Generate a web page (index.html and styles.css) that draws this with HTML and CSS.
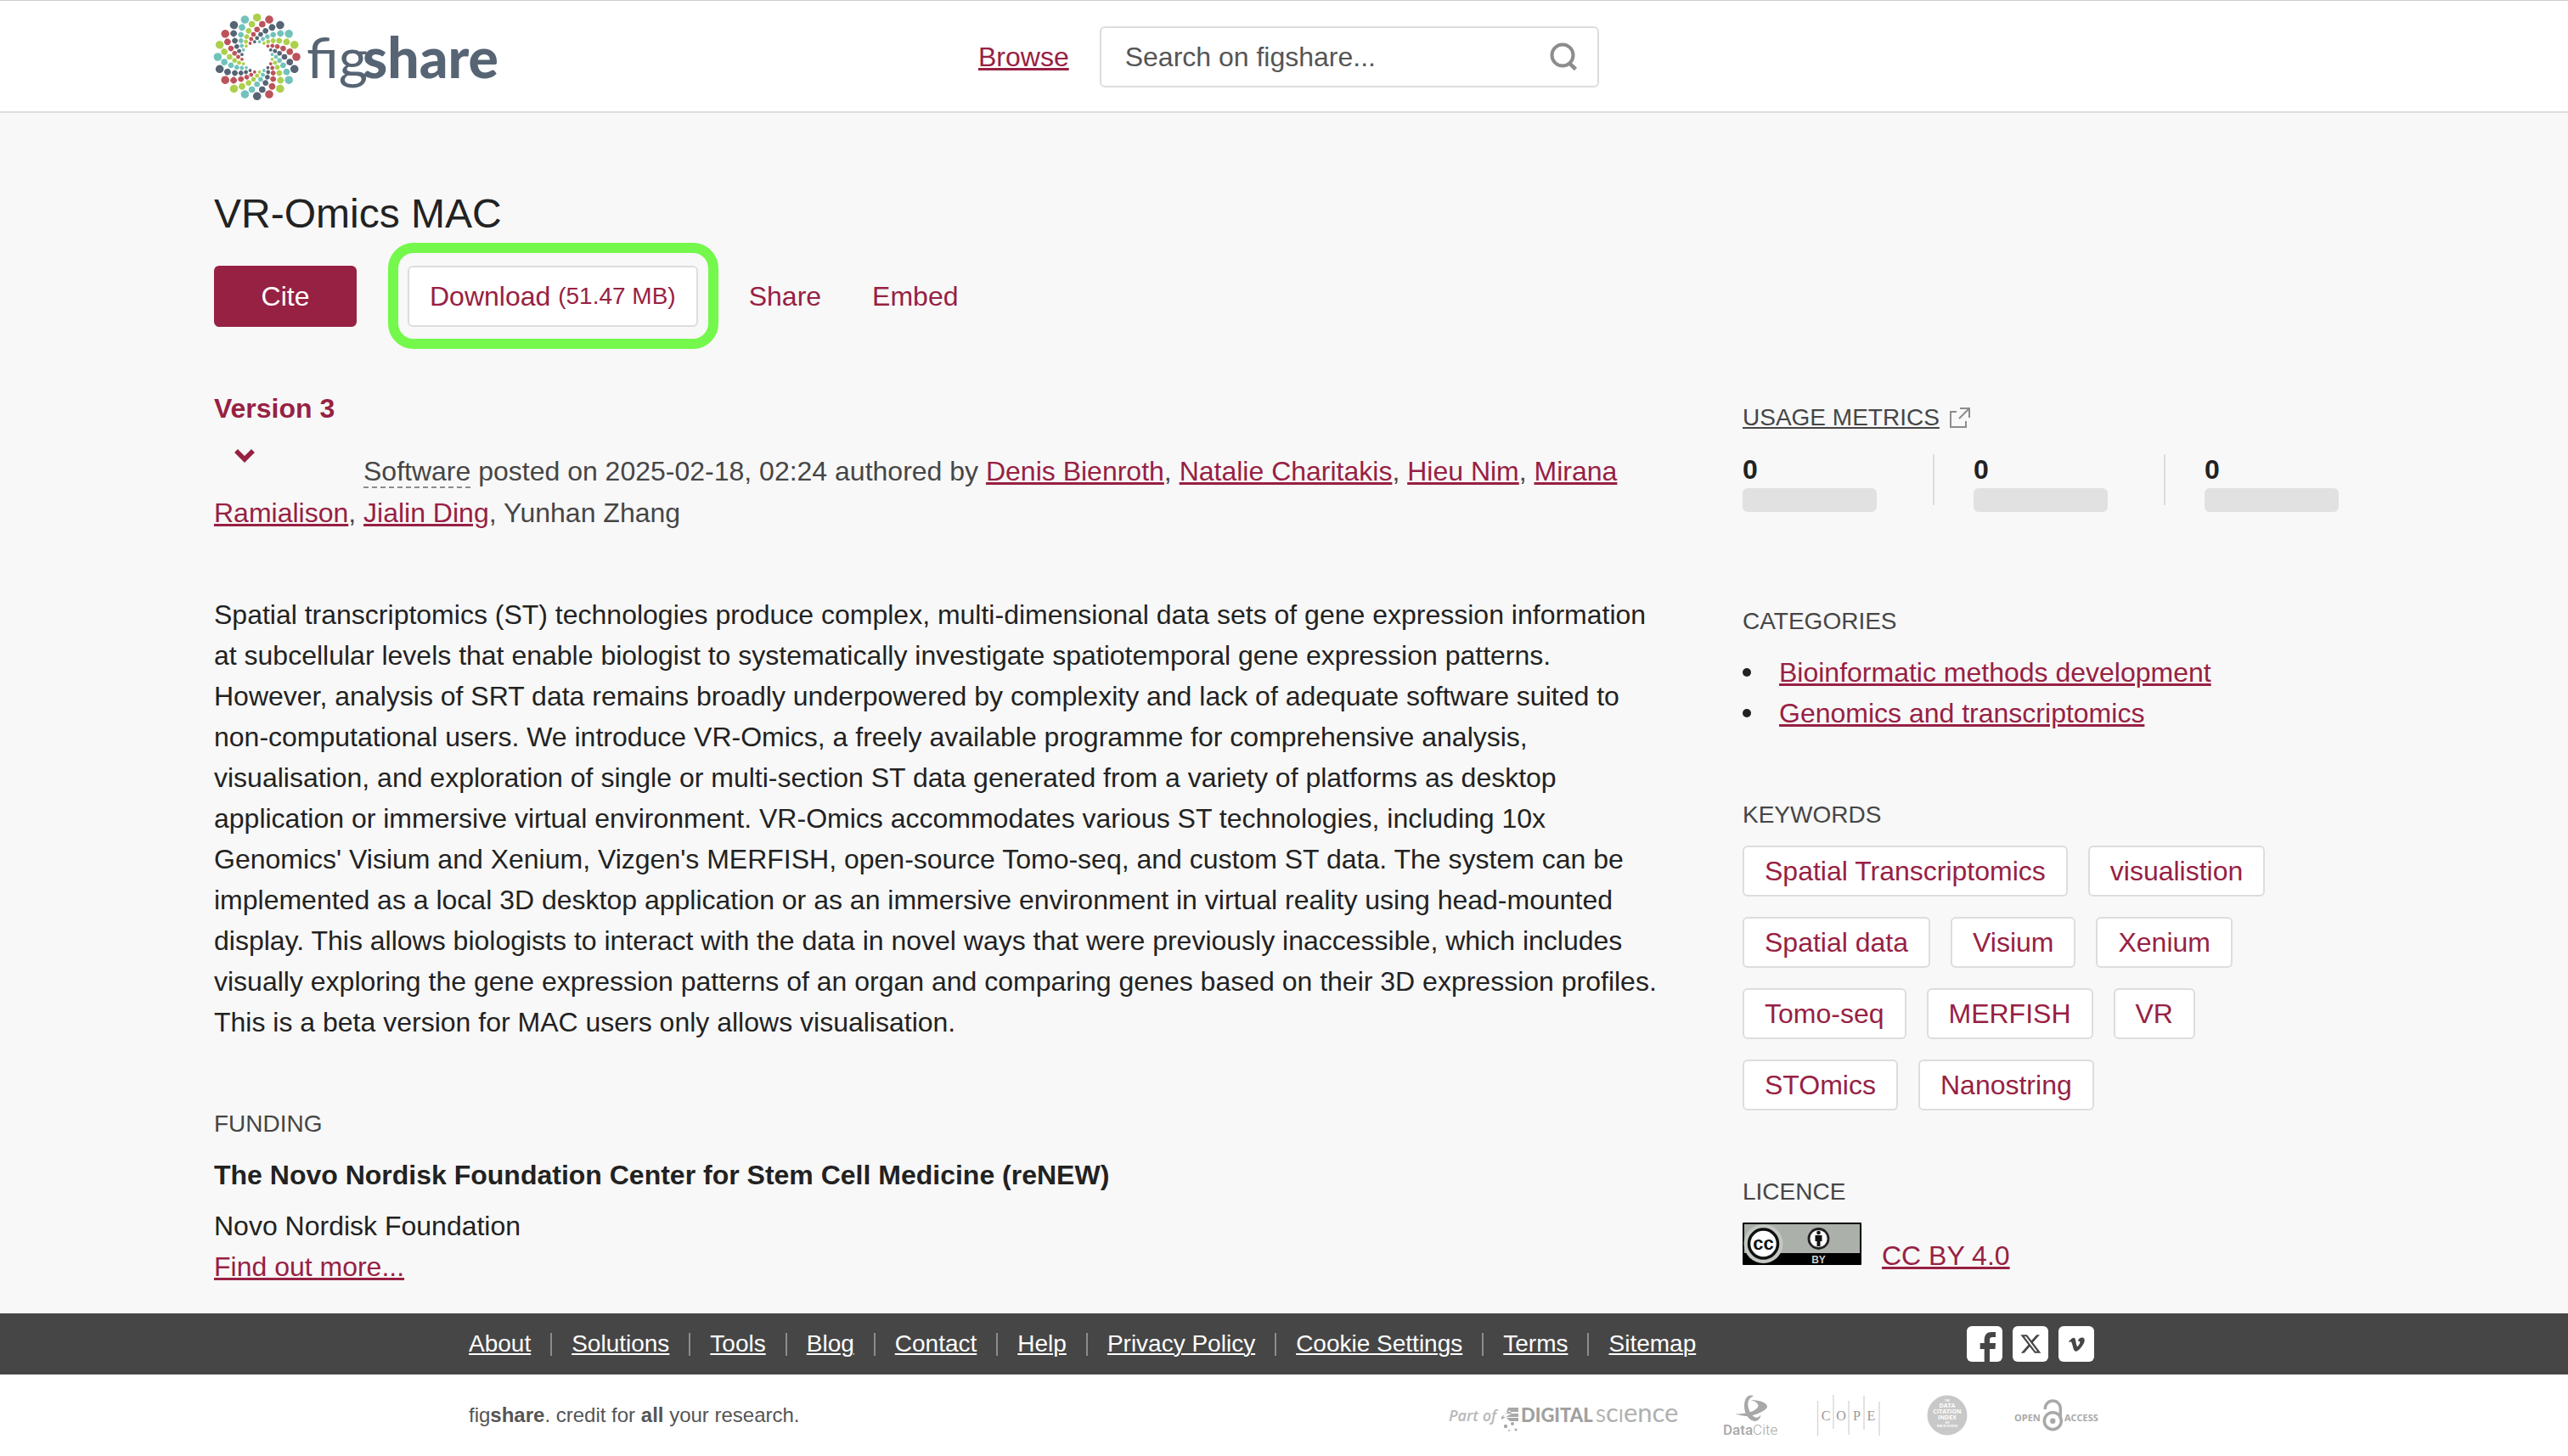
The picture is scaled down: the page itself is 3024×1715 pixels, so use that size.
FILE: index.html
```html
<!DOCTYPE html>
<html lang="en">
<head>
<meta charset="utf-8">
<title>VR-Omics MAC</title>
<link rel="stylesheet" href="styles.css">
</head>
<body>
<header class="site-header">
  <div class="brand">
    <a href="#" aria-label="figshare">
      <svg class="logo" viewBox="0 0 336 108" width="336" height="108">
        <defs>
          <g id="arm">
            <circle cx="0" cy="-46.3" r="4.8"/>
            <circle cx="0" cy="-39" r="3.8" transform="rotate(-9)"/>
            <circle cx="0" cy="-32.3" r="3.3" transform="rotate(-18)"/>
            <circle cx="0" cy="-26.8" r="2.8" transform="rotate(-27)"/>
            <circle cx="0" cy="-22.2" r="2.4" transform="rotate(-36)"/>
            <circle cx="0" cy="-18" r="1.9" transform="rotate(-45)"/>
          </g>
          <g id="arms">
            <use href="#arm" fill="#acd04c"/>
            <use href="#arm" fill="#bc535b" transform="rotate(18)"/>
            <use href="#arm" fill="#566474" transform="rotate(36)"/>
            <use href="#arm" fill="#72c2bc" transform="rotate(54)"/>
          </g>
        </defs>
        <g transform="translate(50.7 54)">
          <use href="#arms"/>
          <use href="#arms" transform="rotate(72)"/>
          <use href="#arms" transform="rotate(144)"/>
          <use href="#arms" transform="rotate(216)"/>
          <use href="#arms" transform="rotate(288)"/>
        </g>
        <text class="logo-text" x="109" y="79">fig<tspan class="logo-bold" x="175">share</tspan></text>
      </svg>
    </a>
  </div>
  <nav class="top-nav">
    <a href="#">Browse</a>
    <form class="search">
      <input type="text" aria-label="Search on figshare" placeholder="Search on figshare...">
      <button type="submit" aria-label="Search">
        <svg viewBox="0 0 34 34" width="34" height="34"><circle cx="15" cy="15" r="12.5" fill="none" stroke="#8c8c8c" stroke-width="4"/><path d="M22.500 24L30.500 31.500" stroke="#8c8c8c" stroke-width="4.500"/></svg>
      </button>
    </form>
  </nav>
</header>

<main class="page">
  <h1>VR-Omics MAC</h1>
  <div class="actions">
    <button class="btn btn-primary">Cite</button>
    <div class="download-wrap">
      <button class="btn btn-outline">Download <span class="size">(51.47 MB)</span></button>
      <span class="highlight"></span>
    </div>
    <button class="btn">Share</button>
    <button class="btn">Embed</button>
  </div>

  <div class="columns">
    <article>
      <p class="meta"><button class="version">Version 3<svg viewBox="0 0 24 15" width="24" height="15"><path d="M2 2l10 10L22 2" fill="none" stroke="#972143" stroke-width="5.500"/></svg></button><span class="type">Software</span> posted on 2025-02-18, 02:24 authored by <a href="#">Denis Bienroth</a>, <a href="#">Natalie Charitakis</a>, <a href="#">Hieu Nim</a>, <a href="#">Mirana Ramialison</a>, <a href="#">Jialin Ding</a>, Yunhan Zhang</p>
      <p class="abstract">Spatial transcriptomics (ST) technologies produce complex, multi-dimensional data sets of gene expression information at subcellular levels that enable biologist to systematically investigate spatiotemporal gene expression patterns. However, analysis of SRT data remains broadly underpowered by complexity and lack of adequate software suited to non-computational users. We introduce VR-Omics, a freely available programme for comprehensive analysis, visualisation, and exploration of single or multi-section ST data generated from a variety of platforms as desktop application or immersive virtual environment. VR-Omics accommodates various ST technologies, including 10x Genomics' Visium and Xenium, Vizgen's MERFISH, open-source Tomo-seq, and custom ST data. The system can be implemented as a local 3D desktop application or as an immersive environment in virtual reality using head-mounted display. This allows biologists to interact with the data in novel ways that were previously inaccessible, which includes visually exploring the gene expression patterns of an organ and comparing genes based on their 3D expression profiles. This is a beta version for MAC users only allows visualisation.</p>
      <section class="block">
        <h2>FUNDING</h2>
        <h3>The Novo Nordisk Foundation Center for Stem Cell Medicine (reNEW)</h3>
        <p>Novo Nordisk Foundation</p>
        <p><a href="#">Find out more...</a></p>
      </section>
    </article>

    <aside>
      <section class="usage">
        <h2><a href="#">USAGE METRICS</a>
          <svg viewBox="0 0 24 24" width="24" height="24" fill="none" stroke="#8c8c8c" stroke-width="2"><path d="M8 5H1v18h18v-7M12 1h11v11M23 1L11 13"/></svg>
        </h2>
        <div class="metrics">
          <div class="metric"><b>0</b><span class="bar"></span></div>
          <span class="divider"></span>
          <div class="metric"><b>0</b><span class="bar"></span></div>
          <span class="divider"></span>
          <div class="metric"><b>0</b><span class="bar"></span></div>
        </div>
      </section>
      <section>
        <h2>CATEGORIES</h2>
        <ul class="categories">
          <li><a href="#">Bioinformatic methods development</a></li>
          <li><a href="#">Genomics and transcriptomics</a></li>
        </ul>
      </section>
      <section class="block">
        <h2>KEYWORDS</h2>
        <div class="tags">
          <a href="#">Spatial Transcriptomics</a><a href="#">visualistion</a><a href="#">Spatial data</a><a href="#">Visium</a><a href="#">Xenium</a><a href="#">Tomo-seq</a><a href="#">MERFISH</a><a href="#">VR</a><a href="#">STOmics</a><a href="#">Nanostring</a>
        </div>
      </section>
      <section class="block">
        <h2>LICENCE</h2>
        <div class="licence">
          <svg viewBox="0 0 140 50" width="140" height="50">
            <rect width="140" height="50" rx="1" fill="#000"/>
            <path d="M2 2h136v34H2z" fill="#abb1aa"/>
            <circle cx="24.500" cy="25" r="23" fill="#c3c8c2"/>
            <circle cx="24.500" cy="25" r="17" fill="#fff" stroke="#111" stroke-width="3.500"/>
            <text class="cc-text" x="24.500" y="31.500">cc</text>
            <circle cx="89.500" cy="19" r="11.500" fill="#fff" stroke="#222" stroke-width="2.800"/>
            <circle cx="89.500" cy="12" r="2.300" fill="#111"/>
            <path d="M85.500 15h8v7h-2v6h-4v-6h-2z" fill="#111"/>
            <text class="by-text" x="89.500" y="47.500">BY</text>
          </svg>
          <a href="#">CC BY 4.0</a>
        </div>
      </section>
    </aside>
  </div>
</main>

<footer>
  <div class="footer-bar">
    <nav class="footer-nav">
      <a href="#">About</a><i></i><a href="#">Solutions</a><i></i><a href="#">Tools</a><i></i><a href="#">Blog</a><i></i><a href="#">Contact</a><i></i><a href="#">Help</a><i></i><a href="#">Privacy Policy</a><i></i><a href="#">Cookie Settings</a><i></i><a href="#">Terms</a><i></i><a href="#">Sitemap</a>
    </nav>
    <div class="social">
      <a href="#" aria-label="Facebook"><svg viewBox="0 0 42 42" width="42" height="42"><path d="M20.700 42V27h-5v-7h5v-3.500C20.700 10 24 7 29 7h5v6h-3.500C28 13 27 14 27 16v4h7l-.5 7H27v15z"/></svg></a>
      <a href="#" aria-label="X"><svg viewBox="0 0 42 42" width="42" height="42"><path transform="translate(8 7.700) scale(1.110)" d="M18.244 2.250h3.308l-7.227 8.260 8.502 11.240H16.170l-5.214-6.817L4.990 21.750H1.680l7.730-8.835L1.254 2.250H8.080l4.713 6.231zm-1.161 17.520h1.833L7.084 4.126H5.117z"/></svg></a>
      <a href="#" aria-label="Vimeo"><svg viewBox="0 0 42 42" width="42" height="42"><path transform="translate(12 12.300) scale(.78)" d="M23.977 6.417c-.105 2.338-1.739 5.543-4.894 9.609-3.268 4.247-6.026 6.370-8.290 6.370-1.409 0-2.578-1.294-3.553-3.881l-1.918-7.114c-.719-2.584-1.488-3.878-2.312-3.878-.179 0-.806.378-1.881 1.132L0 7.198a315 315 0 0 0 3.501-3.128c1.579-1.368 2.765-2.085 3.554-2.159 1.867-.18 3.016 1.100 3.447 3.838.465 2.953.789 4.789.971 5.507.539 2.450 1.131 3.674 1.776 3.674.502 0 1.256-.796 2.265-2.385 1.004-1.589 1.540-2.797 1.612-3.628.144-1.371-.395-2.061-1.614-2.061-.574 0-1.167.121-1.777.391 1.186-3.868 3.434-5.757 6.762-5.637 2.473.060 3.628 1.664 3.493 4.797z"/></svg></a>
    </div>
  </div>
  <div class="footer-base">
    <p>fig<b>share</b>. credit for <b>all</b> your research.</p>
    <div class="partners">
      <svg viewBox="0 0 272 48" width="272" height="48">
        <text class="ds-part" x="0" y="31">Part of</text>
        <g fill="#a8a8a8">
          <path d="M70 15h12v5H68zM66 22h16v4H64zM68 27h14v4H72zM72 18l-10 8v3l12-7z"/>
          <circle cx="67" cy="37" r="2.200"/><circle cx="75" cy="34" r="2"/><circle cx="79" cy="41" r="1.500"/><circle cx="71" cy="42" r="1"/>
        </g>
        <text class="ds-bold" x="85" y="32">DIGITAL</text>
        <text class="ds-light" x="173" y="32"><tspan class="ds-cap">S</tspan>c<tspan class="ds-cap">I</tspan>ence</text>
      </svg>
      <svg viewBox="0 0 70 48" width="70" height="48">
        <g transform="scale(.3333)" fill="#a8a8a8">
          <path d="M123 5C108-5 90 8 90 40c0 30 18 52 38 53 12 0 19-11 21-23-10 15-22 13-33-1C98 45 98 10 123 5z"/>
          <path d="M112 18c38 0 60 12 59 24-1 13-46 34-76 33-15-1-25-4-37-8 32 2 70-6 80-24 5-10-6-20-26-25z"/>
        </g>
        <text class="datacite" x="5" y="47"><tspan class="datacite-bold">Data</tspan>Cite</text>
      </svg>
      <svg viewBox="0 0 74 48" width="74" height="48">
        <path d="M.5 7v41M19 0v40M37 7v40M55 1v40M73 8v40" stroke="#d4d4d4" stroke-width="1.300"/>
        <text class="cope" y="30"><tspan x="10">C</tspan><tspan x="28">O</tspan><tspan x="46.500">P</tspan><tspan x="63.500">E</tspan></text>
      </svg>
      <svg viewBox="0 0 56 48" width="56" height="48">
        <circle cx="33" cy="24" r="23.500" fill="#c8c8c8"/>
        <g class="dci"><text class="dci-small" x="33" y="8">THE</text><text x="33" y="15">DATA</text><text x="33" y="22">CITATION</text><text x="33" y="29">INDEX</text><text class="dci-small" x="33" y="34">ON</text><text class="dci-small" x="33" y="38">WEB OF SCIENCE</text></g>
      </svg>
      <svg viewBox="0 0 110 48" width="110" height="48">
        <text class="oa" x="10" y="31">OPEN</text>
        <g fill="none" stroke="#a8a8a8" stroke-width="3.500"><circle cx="55.300" cy="30.700" r="10"/><path d="M46.300 17v-1a9 9 0 0 1 18 0v12"/></g>
        <circle cx="55.300" cy="30.700" r="3.200" fill="#a8a8a8"/>
        <text class="oa" x="69" y="31">ACCESS</text>
      </svg>
    </div>
  </div>
</footer>
</body>
</html>
```
FILE: styles.css
```css
* { box-sizing: border-box; }

body {
  margin: 0;
  background: #f8f8f8;
  color: #222;
  font: 32px/48px "Liberation Sans", Arial, sans-serif;
}

h1, h2, h3, p, ul { margin: 0; padding: 0; font-weight: 400; }

a {
  color: #972143;
  text-decoration: underline 3px;
  text-underline-offset: 2px;
}

button {
  padding: 0;
  border: 0;
  background: none;
  color: #972143;
  font: inherit;
  cursor: pointer;
}

svg { display: block; flex: none; overflow: visible; }

/* Header */
.site-header {
  display: flex;
  align-items: center;
  padding: 12px 8.3333% 10px;
  background: #fff;
  border-top: 1px solid #ccc;
  border-bottom: 2px solid #ddd;
}
.brand { flex: 0 0 35.7143%; }
.brand a { display: inline-block; vertical-align: top; }
.logo-text { font: 400 66px Lato, sans-serif; fill: #566474; }
.logo-bold { font-weight: 900; }
.top-nav { display: flex; align-items: center; gap: 36px; }
.search {
  display: flex;
  align-items: center;
  width: 588px;
  height: 72px;
  padding: 0 22px 0 28px;
  border: 2px solid #ddd;
  border-radius: 6px;
  background: #fff;
}
.search input {
  flex: 1;
  min-width: 0;
  padding: 0;
  border: 0;
  outline: 0;
  background: none;
  font: inherit;
}
.search input::placeholder { color: #555; opacity: 1; }

/* Item heading and actions */
.page { padding: 90px 8.3333% 31px; }
h1 { font-size: 48px; line-height: 58px; }
.actions { display: flex; gap: 60px; margin: 32px 0 72px; }
.btn { height: 72px; border-radius: 6px; }
.btn-primary { width: 168px; background: #972143; color: #fff; }
.btn-outline { padding: 0 24px; border: 2px solid #ddd; background: #fff; }
.size { font-size: 28px; vertical-align: 2px; line-height: 1; }
.download-wrap { position: relative; }
.highlight {
  position: absolute;
  inset: -27px -24px -26px -23px;
  border: 12px solid #74f84c;
  border-radius: 30px;
  pointer-events: none;
}

/* Two column body */
.columns { display: grid; grid-template-columns: 19fr 8fr; gap: 90px; }
.meta { color: #464646; }
.version {
  width: 176px;
  padding-bottom: 36px;
  font-weight: 700;
  text-align: left;
  vertical-align: bottom;
}
.version svg { margin: 24px 0 0 24px; }
.type { border-bottom: 2px dashed #8c8c8c; }
.abstract { margin-top: 72px; }
.block { margin-top: 76px; }
h2 { margin-bottom: 16px; color: #464646; font-size: 28px; line-height: 40px; }
h3 { margin-bottom: 12px; font-size: 32px; font-weight: 700; }

/* Sidebar */
.usage { padding-top: 15px; margin-bottom: 109px; }
.usage h2 { display: flex; align-items: center; gap: 12px; margin-bottom: 23px; }
.usage h2 a { color: inherit; text-decoration-thickness: 2px; }
.metrics { display: flex; }
.metric { width: 158px; }
.metric b { display: block; line-height: 36px; }
.bar { display: block; height: 28px; margin-top: 4px; border-radius: 6px; background: #e1e1e1; }
.divider { width: 2px; height: 60px; margin: 0 46px 0 66px; background: #ddd; }
.categories { list-style: none; }
.categories li { display: flex; align-items: center; gap: 33px; }
.categories li::before { content: ""; width: 10px; height: 10px; border-radius: 50%; background: #222; }
.tags { display: flex; flex-wrap: wrap; gap: 24px; }
.tags a {
  padding: 4px 24px;
  border: 2px solid #ddd;
  border-radius: 6px;
  background: #fff;
  text-decoration: none;
}
.licence { display: flex; align-items: baseline; gap: 24px; }
.cc-text { font: 700 22px "Liberation Sans", Arial, sans-serif; text-anchor: middle; fill: #111; }
.by-text { font: 700 12px "Liberation Sans", Arial, sans-serif; text-anchor: middle; fill: #ccc; }

/* Footer */
.footer-bar, .footer-base {
  display: flex;
  align-items: center;
  justify-content: space-between;
  padding: 0 18.254%;
}
.footer-bar { min-height: 72px; background: #464646; }
.footer-nav { display: flex; align-items: center; gap: 23px; font-size: 28px; line-height: 40px; white-space: nowrap; }
.footer-nav a { color: #fff; text-decoration-thickness: 2px; }
.footer-nav i { width: 2px; height: 27px; background: #8c8c8c; }
.social { display: flex; gap: 12px; padding-right: 6px; }
.social a { border-radius: 6px; background: #fff; fill: #464646; }
.footer-base { min-height: 96px; background: #fff; color: #555; font-size: 24px; line-height: 36px; }
.partners { display: flex; gap: 46px; }
.ds-part { font: italic 600 18px "Open Sans", sans-serif; fill: #b8b8b8; }
.ds-bold { font: 900 22px Lato, sans-serif; fill: #a0a0a0; }
.ds-light { font: 400 31px Lato, sans-serif; fill: #b0b0b0; }
.ds-cap { font-size: 22px; }
.datacite { font: 300 17px Roboto, sans-serif; fill: #a8a8a8; }
.datacite-bold { font-weight: 500; }
.cope { font: 16px "Liberation Serif", serif; fill: #999; text-anchor: middle; }
.dci { font: 700 7px "Open Sans", sans-serif; fill: #fff; text-anchor: middle; }
.dci-small { font-size: 3px; }
.oa { font: 700 11px "Open Sans", sans-serif; fill: #a8a8a8; }
```
